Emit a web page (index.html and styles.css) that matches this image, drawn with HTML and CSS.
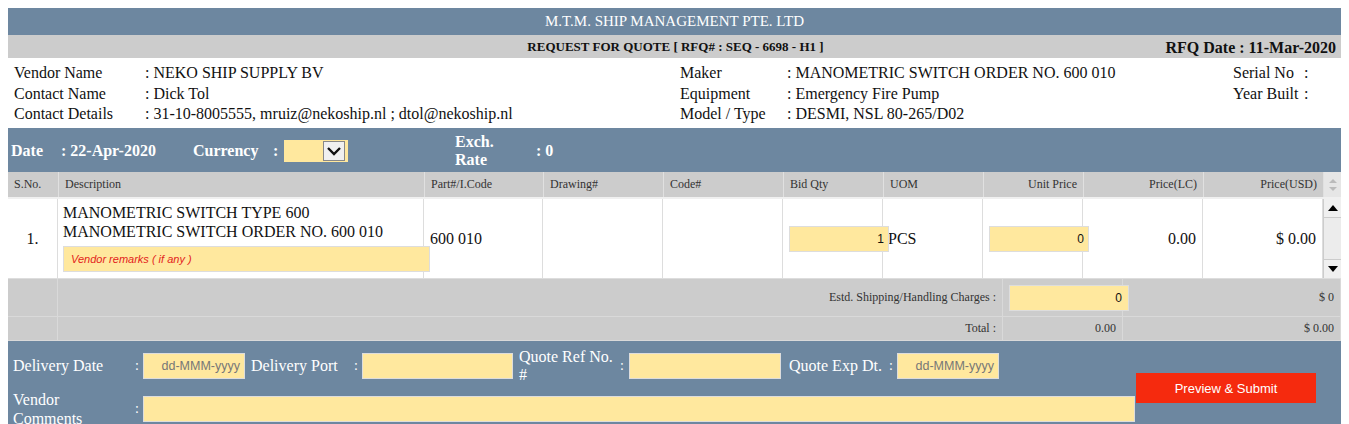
FILE: index.html
```html
<!DOCTYPE html>
<html>
<head>
<meta charset="utf-8">
<link rel="stylesheet" href="styles.css">
</head>
<body>
<div class="page">
  <div class="title-bar">M.T.M. SHIP MANAGEMENT PTE. LTD</div>
  <div class="sub-bar">
    <span></span>
    <span class="rfq-title">REQUEST FOR QUOTE [ RFQ# : SEQ - 6698 - H1 ]</span>
    <span class="rfq-date">RFQ Date : 11-Mar-2020</span>
  </div>

  <div class="info">
    <div class="info-block b1">
      <span class="lbl">Vendor Name</span><span>: NEKO SHIP SUPPLY BV</span>
      <span class="lbl">Contact Name</span><span>: Dick Tol</span>
      <span class="lbl">Contact Details</span><span>: 31-10-8005555, mruiz@nekoship.nl ; dtol@nekoship.nl</span>
    </div>
    <div class="info-block b2">
      <span class="lbl">Maker</span><span>: MANOMETRIC SWITCH ORDER NO. 600 010</span>
      <span class="lbl">Equipment</span><span>: Emergency Fire Pump</span>
      <span class="lbl">Model / Type</span><span>: DESMI, NSL 80-265/D02</span>
    </div>
    <div class="info-block b3">
      <span class="lbl3">Serial No</span><span>:</span>
      <span class="lbl3">Year Built</span><span>:</span>
    </div>
  </div>

  <div class="meta-bar">
    <span class="m-date">Date</span>
    <span class="m-dateval">: 22-Apr-2020</span>
    <span class="m-cur">Currency</span>
    <span class="m-colon">:</span>
    <span class="select">
      <span class="select-btn"><svg width="16" height="12" viewBox="0 0 16 12"><path d="M2 3 L8 9 L14 3" fill="none" stroke="#111" stroke-width="2.4"/></svg></span>
    </span>
    <span class="m-exch">Exch.<br>Rate</span>
    <span class="m-rate">: 0</span>
  </div>

  <div class="grid head">
    <div class="h">S.No.</div>
    <div class="h">Description</div>
    <div class="h">Part#/I.Code</div>
    <div class="h">Drawing#</div>
    <div class="h">Code#</div>
    <div class="h">Bid Qty</div>
    <div class="h">UOM</div>
    <div class="h r">Unit Price</div>
    <div class="h r">Price(LC)</div>
    <div class="h r">Price(USD)</div>
    <div class="h sb-head">
      <svg width="10" height="16" viewBox="0 0 10 16"><path d="M1 6 L5 2 L9 6Z M1 10 L5 14 L9 10Z" fill="#bbb"/></svg>
    </div>
  </div>

  <div class="grid body">
    <div class="c sno">1.</div>
    <div class="c desc">
      <div class="desc-text">MANOMETRIC SWITCH TYPE 600<br>MANOMETRIC SWITCH ORDER NO. 600 010</div>
      <div class="remark">Vendor remarks ( if any )</div>
    </div>
    <div class="c mid">600 010</div>
    <div class="c"></div>
    <div class="c"></div>
    <div class="c mid"><span class="inp qty">1</span></div>
    <div class="c mid uom">PCS</div>
    <div class="c mid"><span class="inp price">0</span></div>
    <div class="c mid r">0.00</div>
    <div class="c mid r">$ 0.00</div>
    <div class="scroll">
      <span class="arrow"><svg width="10" height="6" viewBox="0 0 10 6"><path d="M0 6 L5 0 L10 6Z" fill="#000"/></svg></span>
      <span class="track"></span>
      <span class="arrow"><svg width="10" height="6" viewBox="0 0 10 6"><path d="M0 0 L5 6 L10 0Z" fill="#000"/></svg></span>
    </div>
  </div>

  <div class="totals">
    <div class="t"></div>
    <div class="t lab">Estd. Shipping/Handling Charges :</div>
    <div class="t"><span class="inp ship">0</span></div>
    <div class="t r">$ 0</div>
    <div class="t"></div>
    <div class="t lab">Total :</div>
    <div class="t r">0.00</div>
    <div class="t r">$ 0.00</div>
  </div>

  <div class="bottom">
    <div class="brow">
      <span class="bl w122">Delivery Date</span><span class="bc">:</span>
      <span class="binp date">dd-MMM-yyyy</span>
      <span class="bl w103">Delivery Port</span><span class="bc">:</span>
      <span class="binp port"></span>
      <span class="bl w101 two">Quote Ref No.<br>#</span><span class="bc">:</span>
      <span class="binp ref"></span>
      <span class="bl w100">Quote Exp Dt.</span><span class="bc">:</span>
      <span class="binp date">dd-MMM-yyyy</span>
    </div>
    <div class="brow row2">
      <span class="bl w122 two2">Vendor<br>Comments</span><span class="bc">:</span>
      <span class="binp comments"></span>
    </div>
    <div class="btn">Preview &amp; Submit</div>
  </div>
</div>
</body>
</html>
```

FILE: styles.css
```css
html, body {
  margin: 0;
  padding: 0;
  background: #ffffff;
}
body {
  font-family: "Liberation Serif", "Times New Roman", serif;
  color: #111;
}
.page {
  margin: 8px;
  width: 1333px;
}
.title-bar {
  background: #6d87a0;
  color: #fff;
  height: 27px;
  line-height: 27px;
  text-align: center;
  font-size: 15px;
}
.sub-bar {
  background: #cccccc;
  height: 23px;
  display: grid;
  grid-template-columns: 1fr auto 1fr;
  align-items: center;
  font-weight: bold;
}
.rfq-title {
  font-size: 13px;
  padding-left: 2px;
}
.rfq-date {
  font-size: 16px;
  text-align: right;
  padding-right: 5px;
  padding-top: 3px;
}
.info {
  display: grid;
  grid-template-columns: 666px 553px 1fr;
  padding: 5px 0 6px 6px;
  border-bottom: 1px solid #6d87a0;
  font-size: 16px;
  line-height: 20.5px;
  height: 59px;
}
.info-block {
  display: grid;
  grid-template-columns: 131px 1fr;
  align-content: start;
}
.b2 { grid-template-columns: 107px 1fr; }
.b3 { grid-template-columns: 71px 1fr; }
.meta-bar {
  background: #6d87a0;
  color: #fff;
  height: 43px;
  box-sizing: border-box;
  display: flex;
  align-items: center;
  font-weight: bold;
  font-size: 16px;
  padding: 2px 0 0 3px;
  border-bottom: 1px solid #6d87a0;
}
.m-date { width: 50px; }
.m-dateval { width: 132px; }
.m-cur { width: 80px; }
.m-colon { width: 11px; }
.select {
  width: 64px;
  height: 22px;
  background: #ffe89e;
  display: flex;
  align-items: center;
  justify-content: flex-end;
  padding-right: 3px;
  box-sizing: border-box;
  margin-right: 107px;
}
.select-btn {
  width: 20px;
  height: 18px;
  background: #f0f0f0;
  border: 1px solid #888;
  display: flex;
  align-items: center;
  justify-content: center;
}
.m-exch {
  width: 81px;
  line-height: 18px;
}
.grid {
  display: grid;
  grid-template-columns: 50px 366px 119px 120px 120px 100px 100px 100px 120px 120px 18px;
}
.head {
  background: #cccccc;
  height: 27px;
  box-sizing: border-box;
  border-bottom: 2px solid #f0f0f0;
}
.h {
  font-size: 12px;
  color: #333;
  line-height: 25px;
  padding: 0 6px;
  border-left: 1px solid #e0e0e0;
}
.h:first-child { border-left: none; }
.r { text-align: right; }
.sb-head {
  padding: 0;
  display: flex;
  align-items: center;
  justify-content: center;
  background: #e6e6e6;
}
.body {
  height: 80px;
  background: #fff;
  box-sizing: border-box;
  border-bottom: 1px solid #ddd;
}
.c {
  border-right: 1px solid #ddd;
  font-size: 16px;
  padding: 0 6px;
}
.sno {
  display: flex;
  align-items: center;
  justify-content: center;
  padding: 0;
}
.desc {
  padding: 4px 0 0 5px;
}
.desc-text {
  line-height: 19px;
}
.remark {
  margin-top: 5px;
  width: 367px;
  height: 26px;
  box-sizing: border-box;
  background: #ffe89e;
  border: 1px solid #ddd;
  color: #e3231b;
  font-family: "Liberation Sans", Arial, sans-serif;
  font-style: italic;
  font-size: 11px;
  line-height: 24px;
  padding-left: 7px;
  position: relative;
  z-index: 1;
}
.mid {
  display: flex;
  align-items: center;
}
.mid.r { justify-content: flex-end; }
.uom { padding-left: 5px; }
.inp {
  background: #ffe89e;
  border: 1px solid #ddd;
  height: 26px;
  box-sizing: border-box;
  font-family: "Liberation Sans", Arial, sans-serif;
  font-size: 12px;
  line-height: 24px;
  text-align: right;
  padding-right: 4px;
  display: block;
}
.qty, .price {
  width: 100px;
  flex: none;
  position: relative;
  z-index: 1;
}
.scroll {
  display: flex;
  flex-direction: column;
  background: #e8e8e8;
  border-left: 1px solid #ccc;
}
.arrow {
  height: 18px;
  display: flex;
  align-items: center;
  justify-content: center;
  background: #f0f0f0;
  border-bottom: 1px solid #ccc;
}
.arrow:last-child {
  border-bottom: none;
  border-top: 1px solid #ccc;
}
.track {
  flex: 1;
  background: #ececec;
}
.totals {
  display: grid;
  grid-template-columns: 50px 945px 120px 218px;
  grid-template-rows: 38px 24px;
  background: #cccccc;
}
.t {
  border-right: 1px solid #d9d9d9;
  border-bottom: 1px solid #d9d9d9;
  font-size: 12px;
  color: #333;
  display: flex;
  align-items: center;
  padding: 0 6px;
}
.t.r { justify-content: flex-end; }
.t.lab { justify-content: flex-end; }
.ship {
  width: 120px;
  flex: none;
  height: 26px;
  color: #111;
  padding-right: 6px;
  position: relative;
  z-index: 1;
}
.bottom {
  background: #6d87a0;
  color: #fff;
  display: grid;
  grid-template-columns: 1128px 180px 1fr;
  grid-template-rows: auto auto;
  padding: 7px 0 6px 0;
}
.brow {
  grid-column: 1;
  display: flex;
  align-items: center;
  padding-left: 5px;
  font-size: 16px;
  height: 36px;
}
.row2 {
  grid-row: 2;
  margin-top: 6px;
  height: 38px;
}
.bl { line-height: 18px; }
.two2 { line-height: 19px; }
.w122 { width: 122px; }
.w103 { width: 103px; }
.w101 { width: 101px; }
.w100 { width: 100px; }
.bc { width: 8px; font-size: 14px; }
.binp {
  background: #ffe89e;
  border: 1px solid #ddd;
  height: 26px;
  box-sizing: border-box;
  font-family: "Liberation Sans", Arial, sans-serif;
  font-size: 12.5px;
  color: #777;
  line-height: 24px;
  text-align: right;
  padding-right: 4px;
  margin-right: 6px;
}
.date { width: 102px; }
.port { width: 151px; }
.ref { width: 152px; margin-left: 1px; margin-right: 8px; }
.comments { width: 992px; margin-right: 0; }
.btn {
  grid-column: 2;
  grid-row: 1 / span 2;
  align-self: center;
  height: 30px;
  background: #f52a0e;
  color: #fff;
  font-family: "Liberation Sans", Arial, sans-serif;
  font-size: 13px;
  display: flex;
  align-items: center;
  justify-content: center;
}
```
